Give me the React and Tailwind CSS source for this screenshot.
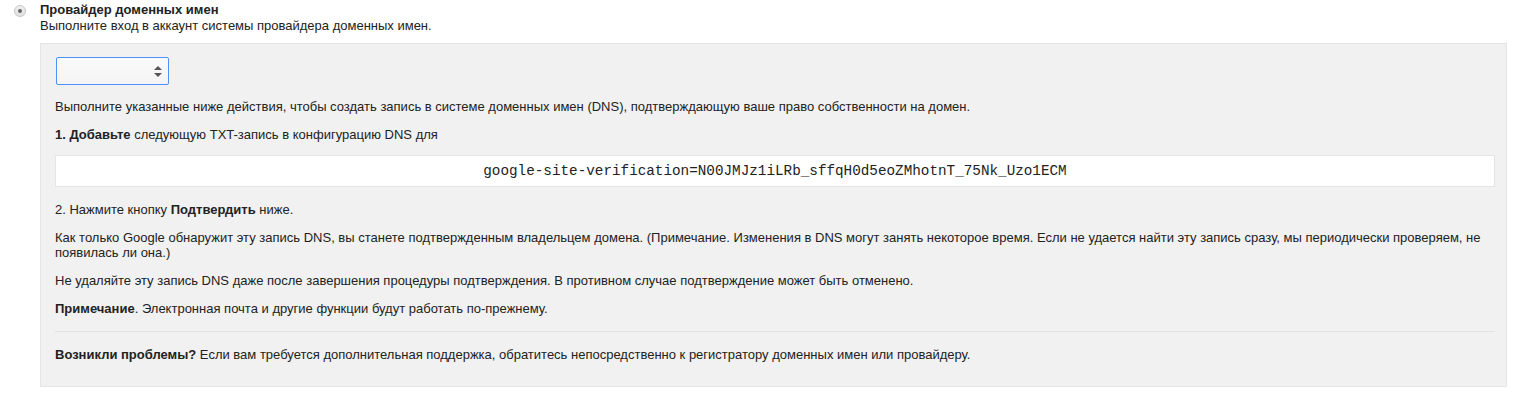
import React from 'react';

const Radio = () => (
  <span className="mt-[3px] ml-[14px] mr-[14px] flex h-[12px] w-[12px] shrink-0 items-center justify-center rounded-full border border-[#c6c6c6] bg-gradient-to-b from-[#f1f1f1] to-[#e0e0e0]">
    <span className="h-[4px] w-[4px] rounded-full bg-[#666]" />
  </span>
);

const SelectBox = () => (
  <div className="relative h-[28px] w-[113px] rounded-[2px] border border-[#4d90fe] bg-gradient-to-b from-[#fafafa] to-[#f4f4f4]">
    <svg className="absolute right-[6px] top-[8px]" width="8" height="11" viewBox="0 0 8 11">
      <path d="M4 0 L8 4 L0 4 Z" fill="#555" />
      <path d="M4 11 L8 7 L0 7 Z" fill="#555" />
    </svg>
  </div>
);

export default function App() {
  return (
    <div className="min-h-[393px] bg-white pt-[2px] pr-[25px] text-[13px] leading-[16px] text-[#222]" style={{ fontFamily: '"Liberation Sans", Arial, sans-serif' }}>
      <div className="flex">
        <Radio />
        <div className="flex-1">
          <div className="font-bold">Провайдер доменных имен</div>
          <div>Выполните вход в аккаунт системы провайдера доменных имен.</div>
          <div className="mt-[9px] border border-[#e5e5e5] bg-[#f1f1f1] pt-[13px] pr-[11px] pb-[24px] pl-[14px] leading-[15px]">
            <div className="pl-[1px]">
              <SelectBox />
            </div>
            <p className="mt-[14px]">
              Выполните указанные ниже действия, чтобы создать запись в системе доменных имен (DNS), подтверждающую ваше право собственности на домен.
            </p>
            <p className="mt-[13px]">
              <b>1. Добавьте</b> следующую TXT-запись в конфигурацию DNS для
            </p>
            <div
              className="mt-[13px] flex h-[32px] items-center justify-center border border-[#e5e5e5] bg-white text-[14.3px] text-[#222]"
              style={{ fontFamily: '"Liberation Mono", "Courier New", monospace' }}
            >
              google-site-verification=N00JMJz1iLRb_sffqH0d5eoZMhotnT_75Nk_Uzo1ECM
            </div>
            <p className="mt-[15px]">
              2. Нажмите кнопку <b>Подтвердить</b> ниже.
            </p>
            <p className="mt-[13px]">
              Как только Google обнаружит эту запись DNS, вы станете подтвержденным владельцем домена. (Примечание. Изменения в DNS могут занять некоторое время. Если не удается найти эту запись сразу, мы периодически проверяем, не появилась ли она.)
            </p>
            <p className="mt-[13px]">
              Не удаляйте эту запись DNS даже после завершения процедуры подтверждения. В противном случае подтверждение может быть отменено.
            </p>
            <p className="mt-[13px]">
              <b>Примечание</b>. Электронная почта и другие функции будут работать по-прежнему.
            </p>
            <hr className="mt-[15px] border-0 border-t border-[#e3e3e3]" />
            <p className="mt-[15px]">
              <b>Возникли проблемы?</b> Если вам требуется дополнительная поддержка, обратитесь непосредственно к регистратору доменных имен или провайдеру.
            </p>
          </div>
        </div>
      </div>
    </div>
  );
}
